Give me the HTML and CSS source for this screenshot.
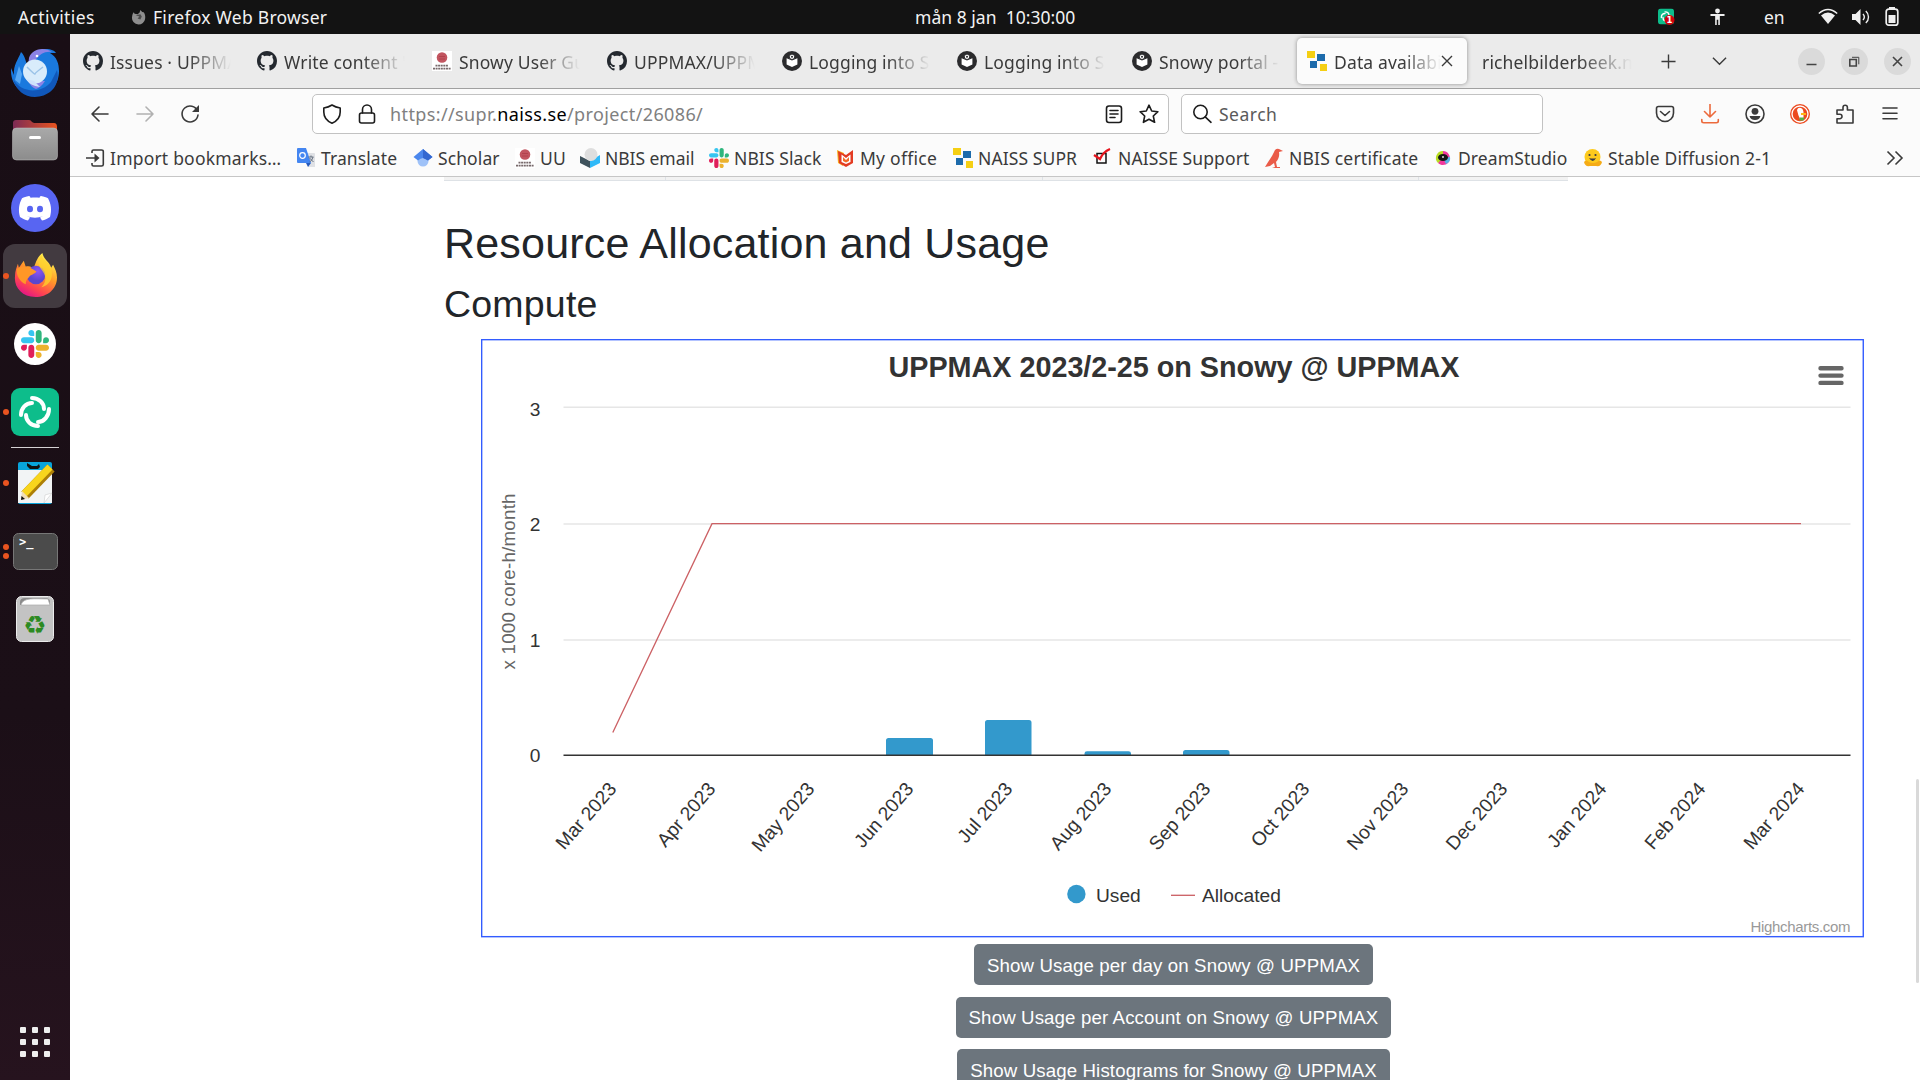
FILE: index.html
```html
<!DOCTYPE html>
<html lang="en">
<head>
<meta charset="utf-8">
<title>Data available</title>
<link rel="stylesheet" href="styles.css">
</head>
<body>
<svg width="0" height="0" class="defs" aria-hidden="true">
  <symbol id="github" viewBox="0 0 16 16"><path fill="#24292f" d="M8 0C3.58 0 0 3.58 0 8c0 3.54 2.29 6.53 5.47 7.59.4.07.55-.17.55-.38 0-.19-.01-.82-.01-1.49-2.01.37-2.53-.49-2.69-.94-.09-.23-.48-.94-.82-1.13-.28-.15-.68-.52-.01-.53.63-.01 1.08.58 1.23.82.72 1.21 1.87.87 2.33.66.07-.52.28-.87.51-1.07-1.78-.2-3.64-.89-3.64-3.95 0-.87.31-1.59.82-2.15-.08-.2-.36-1.02.08-2.12 0 0 .67-.21 2.2.82.64-.18 1.32-.27 2-.27s1.36.09 2 .27c1.53-1.04 2.2-.82 2.2-.82.44 1.1.16 1.92.08 2.12.51.56.82 1.27.82 2.15 0 3.07-1.87 3.75-3.65 3.95.29.25.54.73.54 1.48 0 1.07-.01 1.93-.01 2.2 0 .21.15.46.55.38A8.01 8.01 0 0 0 16 8c0-4.42-3.58-8-8-8z"/></symbol>
  <symbol id="uu" viewBox="0 0 20 20"><path fill="#fff" d="M0 0h20v20H0z"/><circle cx="10" cy="6.500" r="5.300" fill="#c25560"/><path d="M7 5.500h6M7 8h6" stroke="#a83642" opacity=".6"/><path d="M3.500 14.600h13M1 17.600h18" stroke="#77696b" stroke-width="1.600" stroke-dasharray="2 .6"/></symbol>
  <symbol id="mkdocs" viewBox="0 0 20 20"><circle cx="10" cy="10" r="10" fill="#2b2b2d"/><path fill="#fff" d="M4.600 7.200 10 9.600l5.400-2.400v6.400L10 16l-5.400-2.400z"/><circle cx="10" cy="5.800" r="2.700" fill="#fff" stroke="#2b2b2d"/><circle cx="10" cy="5.800" r="1" fill="#2b2b2d"/></symbol>
  <symbol id="naiss" viewBox="0 0 20 20"><path fill="#f5cf13" d="M0 0h8v7H0zM13 13h7v7h-7z"/><path fill="#1d6bab" d="M10 3h8v7h-8zM3 10h7v7H3z"/></symbol>
  <symbol id="slack" viewBox="0 0 122.8 122.8"><path d="M25.8 77.6c0 7.1-5.8 12.9-12.9 12.9S0 84.7 0 77.6s5.8-12.9 12.9-12.9h12.9v12.9zm6.5 0c0-7.1 5.8-12.9 12.9-12.9s12.9 5.8 12.9 12.9v32.3c0 7.1-5.8 12.9-12.9 12.9s-12.9-5.8-12.9-12.9V77.6z" fill="#e01e5a"/><path d="M45.2 25.8c-7.1 0-12.9-5.8-12.9-12.9S38.1 0 45.2 0s12.9 5.8 12.9 12.9v12.9H45.2zm0 6.5c7.1 0 12.9 5.8 12.9 12.9s-5.8 12.9-12.9 12.9H12.9C5.8 58.1 0 52.3 0 45.2s5.8-12.9 12.9-12.9h32.3z" fill="#36c5f0"/><path d="M97 45.2c0-7.1 5.8-12.9 12.9-12.9s12.9 5.8 12.9 12.9-5.8 12.9-12.9 12.9H97V45.2zm-6.5 0c0 7.1-5.8 12.9-12.9 12.9s-12.9-5.8-12.9-12.9V12.9C64.7 5.8 70.5 0 77.6 0s12.9 5.8 12.9 12.9v32.3z" fill="#2eb67d"/><path d="M77.6 97c7.1 0 12.9 5.8 12.9 12.9s-5.8 12.9-12.9 12.9-12.9-5.8-12.9-12.9V97h12.9zm0-6.5c-7.1 0-12.9-5.8-12.9-12.9s5.8-12.9 12.9-12.9h32.3c7.1 0 12.9 5.8 12.9 12.9s-5.8 12.9-12.9 12.9H77.6z" fill="#ecb22e"/></symbol>
  <symbol id="element" viewBox="0 0 48 48"><rect width="48" height="48" rx="9" fill="#0dbd8b"/><g fill="none" stroke="#fff" stroke-width="4" stroke-linecap="round"><path d="M21 10c7 0 12 5 12 11"/><path d="M38 21c0 7-5 13-11 13"/><path d="M27 38c-7 0-12-5-12-11"/><path d="M10 27c0-7 5-12 11-12"/></g></symbol>
</svg>

<header class="topbar">
  <span class="activities">Activities</span>
  <svg class="app-mark" viewBox="0 0 16 16"><path fill="#8e8e8e" d="M8 15.500A7 7 0 0 1 1.200 7C1.400 5 2 3.500 3 2.500l.8 1.600L7 4.500l2-1.500 1-3 2 2 1.500.3C15 4 15.500 7 15 9.500A7 7 0 0 1 8 15.500z"/><path fill="#4a4a4a" d="M5 5.500 9 7l-2 2 3 1 1.500-3L10 4.500z"/></svg>
  <span class="app-name">Firefox Web Browser</span>
  <span class="clock">mån 8 jan &nbsp;10:30:00</span>
  <div class="status">
    <svg class="st-element" viewBox="0 0 18 18"><use href="#element" width="16" height="16" y=".5"/><circle cx="11.500" cy="12" r="5" fill="#d4000b"/><text x="11.500" y="15" text-anchor="middle" class="badge-text">1</text></svg>
    <svg class="st-access" viewBox="0 0 16 18" fill="#efefef"><circle cx="8" cy="2.600" r="2.600"/><path d="M.5 5.800h15v2H10.500V17.500H8.800V12H7.200v5.500H5.500V7.800H.5z"/></svg>
    <span class="lang">en</span>
    <svg class="st-wifi" viewBox="0 0 20 18"><path fill="none" stroke="#efefef" stroke-width="1.400" d="M.8 5.500Q10-2.500 19.200 5.500"/><path fill="#efefef" d="M3 7.500Q10 1.500 17 7.500L10 16z"/></svg>
    <svg class="st-sound" viewBox="0 0 20 18"><path fill="#efefef" d="M1 6h3.500L9.500 1v16L4.500 12H1z"/><path d="M12 6a4.500 4.500 0 0 1 0 6M14.800 3a8 8 0 0 1 0 12" fill="none" stroke="#efefef" stroke-width="1.400"/></svg>
    <svg class="st-battery" viewBox="0 0 14 20"><path fill="#efefef" d="M4 0h6v2H4zM3.500 8h7v8h-7z"/><rect x="1.200" y="2.200" width="11.600" height="16" rx="2.500" fill="none" stroke="#efefef" stroke-width="1.700"/></svg>
  </div>
</header>

<div class="desktop">
<nav class="dock">
  <div class="app bird"><svg width="50" height="50" viewBox="0 0 50 50"><path fill="#1a79de" d="M11 4c5 5 4 10 7 13l2-8c3-7 12-8 16-8 5 0 9 2 10 4h-6c7 4 9 11 9 18 0 14-10 24-24 24C11 47 0 37 1 20l3 7C3 17 8 12 11 4z"/><path fill="#1057ba" d="M3 31c7 13 27 16 38 3l6-12c4 16-8 27-22 27C14 49 6 42 3 31z"/><path fill="#8a82e6" d="M19 10C22 0 35-1 42 4c-8-1-12 3-15 6-2 3-5 4-9 8zM35 33c-3 5-6 7-9 8-3-1-6-4-8-8z"/><circle cx="25" cy="23.500" r="12" fill="#d9ecfb"/><path d="M17 19q8 8 8 7t8-7" fill="none" stroke="#9bc3e8" stroke-width="1.500"/><path fill="#cfe2fb" d="M16 31c3 5 7 7 14 8l-6-6z"/><path fill="#59a9f5" d="m9 18 3 8-2 10-5-4z"/><circle cx="27" cy="8" r="1.300" fill="#fff"/></svg></div>
  <div class="app"><svg width="46" height="42" viewBox="0 0 46 42"><defs><linearGradient id="fold"><stop stop-color="#7c2b55"/><stop offset="1" stop-color="#e9541f"/></linearGradient><linearGradient id="grey" x2="0" y2="1"><stop stop-color="#a9a9a9"/><stop offset="1" stop-color="#8c8c8c"/></linearGradient></defs><path fill="url(#fold)" d="M1 4q0-3 3-3h13q2 0 3 2l2 1h20q3 0 3 4v9H1z"/><rect x=".5" y="9" width="45" height="32" rx="4" fill="url(#grey)" stroke="#c3c3c3" stroke-opacity=".5"/><rect x="17" y="17" width="12" height="3" rx="1.500" fill="#fff"/></svg></div>
  <div class="app"><svg width="48" height="48" viewBox="0 0 48 48"><circle cx="24" cy="24" r="24" fill="#5865f2"/><path fill="#fff" d="M19 12.500 18 12c-3 .5-5 1.200-7 2.300C8 20 7 26 9 33c3 2 5 3 8 3.500l2-3c-1-.4-2-.8-3-1.500 5 2.200 11 2.200 16 0-1 .7-2 1.100-3 1.500l2 3c3-.5 5-1.500 8-3.500 2-7 1-13-2-18.700-2-1.100-4-1.800-7-2.300l-1 .5-.5 1.300c-3-.4-6-.4-9 0z"/><ellipse cx="19" cy="25" rx="3" ry="3.200" fill="#5865f2"/><ellipse cx="29" cy="25" rx="3" ry="3.200" fill="#5865f2"/></svg></div>
  <div class="app active"><i class="dots"><b></b></i><svg width="43" height="45" viewBox="0 0 44 46"><defs><linearGradient id="fx" x1=".8" y1=".1" x2=".3" y2="1"><stop stop-color="#fff04f"/><stop offset=".4" stop-color="#ff9c27"/><stop offset=".75" stop-color="#ff4550"/><stop offset="1" stop-color="#e31587"/></linearGradient><radialGradient id="globe" cx=".6" cy=".3"><stop stop-color="#8f55f5"/><stop offset="1" stop-color="#5b46cf"/></radialGradient></defs><path fill="url(#fx)" d="M22 46C8 46 0 36 1 25c0-6 2-10 3-13l1 4 5-7 2 6c4-1 6 0 8 2 2-5 3-11 9-16 2 8 7 8 9 15l2-3c2 4 4 8 4 13 0 12-10 20-22 20z"/><circle cx="22.500" cy="23.500" r="9.500" fill="url(#globe)"/><path fill="#ff9727" d="M3 17c7-4 13-2 20 3-2 3-6 3-8 6-2 2-3 4-3 7-6-3-10-9-9-16z"/><path fill="#ffd32d" d="M28 3c-3 6-4 10 0 15 5 6 6 12 0 18 10-2 14-13 8-23-3-4-7-5-8-10z" opacity=".75"/></svg></div>
  <div class="app"><svg width="42" height="42" viewBox="0 0 42 42"><circle cx="21" cy="21" r="21" fill="#fff"/><use href="#slack" x="7" y="7" width="28" height="28"/></svg></div>
  <div class="app"><i class="dots"><b></b></i><svg width="48" height="48"><use href="#element"/></svg></div>
  <hr class="dock-line">
  <div class="app"><i class="dots"><b></b></i><svg width="40" height="42" viewBox="0 0 40 42"><rect x="3" width="34" height="42" rx="2" fill="#08a4dc"/><path fill="#f2f4f5" d="M3 8h34v33H3z"/><path fill="#111" d="m12 1 5 3h5l2-2 1 3-2 2h-8l-3-3z"/><path d="m10 33 26-27" stroke="#ad7f06" stroke-width="10"/><path d="m9 32 26-27" stroke="#f8d51d" stroke-width="7"/><path fill="#f0ddb5" d="m6 38 1-9 7 7z"/><path fill="#111" d="m6 38 .5-4 3.500 3z"/><path fill="#fff" stroke="#ccc" stroke-width=".6" d="m29 41 1-8 7-2z"/></svg></div>
  <div class="app"><i class="dots"><b></b><b></b></i><svg width="45" height="37" viewBox="0 0 45 37"><rect x=".5" y=".5" width="44" height="36" rx="5" fill="#4b4b4b" stroke="#777"/><text x="6" y="13" class="prompt">&gt;_</text></svg></div>
  <div class="app"><svg width="38" height="46" viewBox="0 0 38 46"><rect x=".5" y=".5" width="37" height="45" rx="5" fill="#c3c3c3" stroke="#ececec"/><path d="M4 9V6q0-4 5-4h20q5 0 5 4v3z" fill="#8a8a8a"/><path d="M5 9c2-8 14-6 27-6l2 6z" fill="#fff" stroke="#aaa" stroke-width=".7"/><text x="19" y="38" text-anchor="middle" class="recycle">♻</text></svg></div>
  <div class="launcher"><b></b><b></b><b></b><b></b><b></b><b></b><b></b><b></b><b></b></div>
</nav>

<div class="browser">
  <div class="tabs">
    <div class="tab first"><svg><use href="#github"/></svg><span>Issues · UPPMAX</span></div>
    <div class="tab"><svg><use href="#github"/></svg><span>Write content '</span></div>
    <div class="tab"><svg><use href="#uu"/></svg><span>Snowy User Guide</span></div>
    <div class="tab"><svg><use href="#github"/></svg><span>UPPMAX/UPPMAX</span></div>
    <div class="tab"><svg><use href="#mkdocs"/></svg><span>Logging into Snowy</span></div>
    <div class="tab"><svg><use href="#mkdocs"/></svg><span>Logging into Snowy</span></div>
    <div class="tab"><svg><use href="#mkdocs"/></svg><span>Snowy portal -</span></div>
    <div class="tab current"><svg><use href="#naiss"/></svg><span>Data availability</span><svg class="close" viewBox="0 0 12 12"><path d="m1 1 10 10M11 1 1 11"/></svg></div>
    <div class="tab plain"><span>richelbilderbeek.nl</span></div>
    <svg class="tab-tool" viewBox="0 0 16 16"><path d="M8 .5v15M.5 8h15"/></svg>
    <svg class="tab-tool list" viewBox="0 0 16 16"><path d="m1 4 7 7 7-7"/></svg>
    <div class="win">
      <svg viewBox="0 0 27 27"><path d="M8.500 16.500h10"/></svg>
      <svg viewBox="0 0 27 27"><path d="M8.800 11.500h6.500v6.500H8.800z"/><path stroke-width="1" d="M11 9.300h6.800v7"/></svg>
      <svg viewBox="0 0 27 27"><path d="m9 9 9 9m0-9-9 9"/></svg>
    </div>
  </div>

  <div class="toolbar">
    <div class="nav-buttons">
      <svg viewBox="0 0 20 20"><path d="M18 10H2M9 3l-7 7 7 7"/></svg>
      <svg class="off" viewBox="0 0 20 20"><path d="M2 10h16M11 3l7 7-7 7"/></svg>
      <svg viewBox="0 0 20 20"><path d="M17.500 7A8 8 0 1 0 18 11"/><path fill="#3a3a3a" stroke="none" d="M19 1v7h-7z"/></svg>
    </div>
    <div class="field url">
      <svg viewBox="0 0 20 20"><path d="M10 1c3 2 5.500 2.600 8.200 3v4c0 5-3 9-8.200 11.200C4.800 17 1.800 13 1.800 8V4C4.500 3.600 7 3 10 1z"/></svg>
      <svg class="lock" viewBox="0 0 20 20"><rect x="2.500" y="9" width="15" height="10" rx="2"/><path d="M5.500 9V5.500a4.500 4.500 0 0 1 9 0V9"/></svg>
      <span class="address">https://supr.<b>naiss.se</b>/project/26086/</span>
      <svg viewBox="0 0 20 20"><rect x="2.500" y="2" width="15" height="16.500" rx="2.500"/><path d="M6 6.500h8M6 10h8M6 13.500h5"/></svg>
      <svg class="star" viewBox="0 0 20 20"><path d="m10 1.200 2.700 5.800 6.200.7-4.600 4.300 1.300 6.300L10 15.200l-5.600 3.100L5.700 12 1.100 7.700 7.300 7z"/></svg>
    </div>
    <div class="field search">
      <svg viewBox="0 0 20 20"><circle cx="8.500" cy="8" r="6.700"/><path d="m13.200 12.800 5.800 5.500"/></svg>
      <span>Search</span>
    </div>
    <div class="tools">
      <svg viewBox="0 0 20 20"><path d="M3.500 2.500h13q2 0 2 2V9a8.500 8.500 0 0 1-17 0V4.500q0-2 2-2zM5.500 7.500l4.500 4 4.500-4"/></svg>
      <svg class="down" viewBox="0 0 20 20"><path d="M10 0v13M4.500 7.500 10 13l5.500-5.500M1.800 15.500v1.500q0 1.700 2 1.700h12.500q2 0 2-1.700v-1.500"/></svg>
      <svg viewBox="0 0 20 20"><circle cx="10" cy="10" r="9"/><g stroke="none" fill="#3a3a3a"><circle cx="10" cy="7.300" r="3.400"/><path d="M4.500 12h11q-1 4-5.500 4t-5.500-4z"/></g></svg>
      <svg class="duck" viewBox="0 0 20 20"><circle cx="10" cy="10" r="10" fill="#ec4a1f"/><circle cx="10" cy="10" r="8" fill="#ec4a1f" stroke="#fff" stroke-width="1.300"/><path fill="#fff" d="M7 6q1-3 4-2 2.500 1 2.500 5v6H10q-2-4-3-9z"/><path fill="#fdb814" d="M11 9h5v2h-5z"/><path fill="#55b34a" d="M9.500 13.500h5l-1 3h-4z"/></svg>
      <svg viewBox="0 0 20 20"><path d="M2 19v-4.300h2.800a2.200 2.200 0 0 0 0-4.400H2V6h6V3.500a2.200 2.200 0 0 1 4.400 0V6H18v13z"/></svg>
      <svg viewBox="0 0 20 20"><path d="M3 4h14M3 9.300h14M3 14.700h14"/></svg>
    </div>
  </div>

  <div class="bookmarks">
    <a class="bm w1"><svg viewBox="0 0 20 20"><path class="line" d="M7 5V3.500Q7 2 8.500 2h8Q18.300 2 18.300 3.500v13q0 1.500-1.800 1.500h-8Q7 18 7 16.500V15M1 10h12"/><path fill="#3a3a3a" d="m9.500 5.500 5 4.500-5 4.500z"/></svg>Import bookmarks…</a>
    <a class="bm w2"><svg viewBox="0 0 20 20"><path fill="#dfe1e5" d="M10 5h8q1 0 1 1v13h-7z"/><path fill="#4486f1" d="M2 0h8l5 15H2q-1 0-1-1V1q0-1 1-1z"/><path fill="#2559bd" d="M10 15h5l-3 4z"/><circle cx="6.500" cy="7.500" r="2.800" fill="none" stroke="#fff" stroke-width="1.200"/><path d="M12.500 9h5M15 7.500V9m2 0q-1 4-3.500 5M13.500 10l4 4" stroke="#657080" fill="none"/></svg>Translate</a>
    <a class="bm w3"><svg viewBox="0 0 20 20"><circle cx="10" cy="13" r="5.500" fill="#9fc2f8"/><path fill="#4b87ed" d="m10 1 9.500 8-4.500 3.500q-5-5-10 0L.5 9z"/><path fill="#3367d0" d="m10 1 9.500 8-4.500 3.500L10 10z"/></svg>Scholar</a>
    <a class="bm w4"><svg><use href="#uu"/></svg>UU</a>
    <a class="bm w5"><svg viewBox="0 0 20 20"><path fill="#3f525c" d="m0 8 10 5v7L0 15z"/><path fill="#2fb9f8" d="m20 7-10 6v7l10-5z"/><circle cx="11" cy="6.500" r="6.500" fill="#dedede"/></svg>NBIS email</a>
    <a class="bm w6"><svg><use href="#slack"/></svg>NBIS Slack</a>
    <a class="bm w7"><svg viewBox="0 0 20 20"><path fill="#f7b51d" d="m1 2 7 3-1 13-5-3z"/><path fill="#e33b22" d="m17 2-7 5-4-2-4-2 1 12 7 4 7-4z"/><path fill="#fff" d="m5.500 6.500 4.500 3.500 4.500-3.500v7.500L10 16l-4.500-2z"/><path fill="#f36b25" d="m7 9 3 3 3-3v4l-3 1.500L7 13z"/></svg>My office</a>
    <a class="bm w8"><svg><use href="#naiss"/></svg>NAISS SUPR</a>
    <a class="bm w9"><svg viewBox="0 0 20 20"><path fill="none" stroke="#111" stroke-width="1.500" d="M4 5.500h9V15H4z"/><path fill="none" stroke="#e6141d" stroke-width="2.200" d="m1 7 6 4Q10 4 17 1"/></svg>NAISSE Support</a>
    <a class="bm w10"><svg viewBox="0 0 20 20"><path fill="#ea5b48" d="M11 2q2-2 4-1l4 2-4 1q1 6-3 10l1 5h3v1H8l3-1-1-4-4 3-5 1Q4 14 8 8z"/></svg>NBIS certificate</a>
    <a class="bm w11"><svg viewBox="0 0 20 20"><path fill="#f0389c" d="M10 3a7 7 0 1 1-5 12z"/><path fill="#b8dc24" d="M10 3a7 7 0 0 0-5 12l5-5z"/><path fill="#56b4e5" d="m10 10 7-1q1 5-4 7z"/><ellipse cx="10" cy="9.500" rx="5" ry="3.500" fill="#171717"/><circle cx="10" cy="9" r="1" fill="#ddd"/></svg>DreamStudio</a>
    <a class="bm w12"><svg viewBox="0 0 20 20"><circle cx="9.500" cy="9" r="8" fill="#fdca1d"/><path fill="#f5ab16" d="M1 14q2-3 5 0 4 2 8 0 3-3 5 0-1 5-6 4h-6q-5 1-6-4z"/><path fill="#3a3b45" d="M6 10q4 1 7 0-3 6-7 0z"/><circle cx="6.500" cy="7" r="1.100" fill="#3a3b45"/><circle cx="12.500" cy="7" r="1.100" fill="#3a3b45"/></svg>Stable Diffusion 2-1</a>
    <svg class="more" viewBox="0 0 18 18"><path d="m1.500 2.500 6.500 6.500-6.500 6.500m8-13L16 9l-6.500 6.500"/></svg>
  </div>

  <main class="page">
    <div class="table-end"><i></i><i></i><i></i><i></i></div>
    <h1>Resource Allocation and Usage</h1>
    <h2>Compute</h2>
    <svg class="chart" viewBox="481 339 1384 599">
      <rect class="frame" x="481.670" y="339.670" width="1381.600" height="597"/>
      <text class="title" x="1174" y="376.500" text-anchor="middle" textLength="571">UPPMAX 2023/2-25 on Snowy @ UPPMAX</text>
      <path class="burger" d="M1820.500 368.300h21M1820.500 375.600h21M1820.500 382.900h21"/>
      <path class="grid" d="M563.500 407.200h1287M563.500 524h1287M563.500 640h1287"/>
      <g class="bars"><path d="M886 755V740.500q0-2.500 2.500-2.500h42q2.500 0 2.500 2.500V755zM985 755V722.500q0-2.500 2.500-2.500h41.500q2.500 0 2.500 2.500V755zM1084.500 755v-1.500q0-2.200 2.500-2.200h41.500q2.500 0 2.500 2.200v1.500zM1183 755v-2.500q0-2.500 2.500-2.500h41.500q2.500 0 2.500 2.500v2.500z"/></g>
      <path class="axis" d="M563.500 755.200h1287"/>
      <path class="alloc" d="M612.800 732.500 712 523.600h1089"/>
      <g class="label" text-anchor="end"><text x="540.500" y="416">3</text><text x="540.500" y="531">2</text><text x="540.500" y="647">1</text><text x="540.500" y="761.500">0</text></g>
      <text class="unit" transform="translate(515 581.500) rotate(-90)" text-anchor="middle" textLength="176">x 1000 core-h/month</text>
      <g class="label" text-anchor="end">
        <text transform="translate(617.500 789.500) rotate(-49)">Mar 2023</text>
        <text transform="translate(716.500 789.500) rotate(-49)">Apr 2023</text>
        <text transform="translate(815.500 789.500) rotate(-49)">May 2023</text>
        <text transform="translate(914.500 789.500) rotate(-49)">Jun 2023</text>
        <text transform="translate(1013.500 789.500) rotate(-49)">Jul 2023</text>
        <text transform="translate(1112.500 789.500) rotate(-49)">Aug 2023</text>
        <text transform="translate(1211.500 789.500) rotate(-49)">Sep 2023</text>
        <text transform="translate(1310.500 789.500) rotate(-49)">Oct 2023</text>
        <text transform="translate(1409.500 789.500) rotate(-49)">Nov 2023</text>
        <text transform="translate(1508.500 789.500) rotate(-49)">Dec 2023</text>
        <text transform="translate(1607.500 789.500) rotate(-49)">Jan 2024</text>
        <text transform="translate(1706.500 789.500) rotate(-49)">Feb 2024</text>
        <text transform="translate(1805.500 789.500) rotate(-49)">Mar 2024</text>
      </g>
      <circle cx="1076.400" cy="894" r="9.200" fill="#39c"/>
      <text class="legend" x="1096" y="901.700">Used</text>
      <path class="alloc" d="M1171 895.300h24"/>
      <text class="legend" x="1202" y="901.700">Allocated</text>
      <text class="credit" x="1850.500" y="932" text-anchor="end" textLength="100">Highcharts.com</text>
    </svg>
    <div class="actions">
      <button>Show Usage per day on Snowy @ UPPMAX</button>
      <button>Show Usage per Account on Snowy @ UPPMAX</button>
      <button>Show Usage Histograms for Snowy @ UPPMAX</button>
    </div>
    <div class="scroll-thumb"></div>
  </main>
</div>
</div>
</body>
</html>
```
FILE: styles.css
```css
* { box-sizing: border-box; }
body { margin: 0; width: 1920px; height: 1080px; overflow: hidden; background: #fff; color: #3a3a3a; font: 17.500px "Noto Sans", sans-serif; display: flex; flex-direction: column; }
svg { display: block; flex: none; }
.defs { display: none; }

.topbar { height: 34px; flex: none; background: #131313; color: #f2f2f2; display: flex; align-items: center; }
.activities { width: 113px; padding-left: 18px; white-space: nowrap; letter-spacing: .38px; }
.app-mark { width: 15px; height: 15px; margin-left: 18px; }
.app-name { width: 762px; margin-left: 7px; letter-spacing: .27px; }
.clock { width: 743px; letter-spacing: .03px; }
.status { display: flex; align-items: center; }
.st-element { width: 18px; height: 18px; margin-right: 34px; }
.st-access { width: 15px; height: 18px; margin-right: 39px; }
.lang { width: 54px; }
.st-wifi { width: 20px; height: 18px; margin-right: 13px; }
.st-sound { width: 20px; height: 18px; margin-right: 14px; }
.st-battery { width: 14px; height: 20px; }
.badge-text { font: bold 8.500px "DejaVu Sans", sans-serif; fill: #fff; }

.desktop { flex: 1; min-height: 0; display: flex; }
.dock { width: 70px; flex: none; padding-top: 4px; background: linear-gradient(#190e15, #1b0f17 65%, #26131e); display: flex; flex-direction: column; }
.app { position: relative; height: 68px; flex: none; display: flex; align-items: center; justify-content: center; }
.active::before { content: ""; position: absolute; inset: 2px 3px; border-radius: 12px; background: #423a40; }
.app svg { position: relative; }
.bird { padding-top: 2px; }
.active { padding-bottom: 3px; }
.dots { position: absolute; left: 3px; top: 0; height: 68px; display: flex; flex-direction: column; justify-content: center; gap: 3px; z-index: 1; }
.dots b { width: 6px; height: 6px; border-radius: 50%; background: #e95420; }
.dock-line { width: 48px; height: 1px; margin: 1px auto; border: 0; background: #d5d2d4; flex: none; }
.prompt { font: bold 12px "DejaVu Sans Mono", monospace; fill: #fff; }
.recycle { font: 26px "DejaVu Sans", sans-serif; fill: #2c8a22; }
.launcher { margin: auto auto 23px; display: grid; grid-template-columns: repeat(3, 6px); gap: 6px; }
.launcher b { height: 6px; border-radius: 1px; background: #eee; }

.browser { flex: 1; min-width: 0; display: flex; flex-direction: column; }
.tabs { height: 55px; flex: none; padding-left: 3px; background: #ebebeb; border-bottom: 1px solid #a0a0a0; display: flex; align-items: center; }
.tab { width: 170px; height: 46px; margin-right: 5px; padding-left: 10px; flex: none; border-radius: 5px; display: flex; align-items: center; }
.first { margin-right: 4px; }
.tab svg { width: 20px; height: 20px; margin-right: 7px; }
.tab span { width: 121px; padding-top: 1px; overflow: hidden; white-space: nowrap; letter-spacing: .15px; -webkit-mask-image: linear-gradient(90deg, #000 65%, transparent); mask-image: linear-gradient(90deg, #000 65%, transparent); }
.current { margin-right: 6px; background: #fbfbfb; box-shadow: 0 0 4px #0006; }
.tab.current span { width: 107px; }
.tab .close { width: 12px; height: 12px; margin: 0; fill: none; stroke: #3a3a3a; stroke-width: 1.400; }
.plain { width: 179px; margin: 0; padding-left: 9px; }
.tab.plain span { width: 150px; }
.tab-tool { width: 15px; height: 15px; margin-left: 9px; fill: none; stroke: #3a3a3a; stroke-width: 1.500; }
.list { margin-left: 36px; }
.win { display: flex; gap: 16px; margin-left: 71px; }
.win svg { width: 27px; height: 27px; border-radius: 50%; background: #dadada; fill: none; stroke: #444; stroke-width: 1.600; }

.toolbar { height: 51px; flex: none; padding-bottom: 2px; background: #fbfbfb; display: flex; align-items: center; }
.nav-buttons { display: flex; gap: 25px; margin-left: 20px; }
.nav-buttons svg, .field svg, .tools svg { width: 20px; height: 20px; fill: none; stroke: #3a3a3a; stroke-width: 1.600; stroke-linecap: round; stroke-linejoin: round; }
.nav-buttons .off { opacity: .38; }
.field { height: 40px; border: 1px solid #c2c2c2; border-radius: 5px; background: #fff; display: flex; align-items: center; }
.field svg { stroke: #1c1c1c; }
.url { width: 857px; margin-left: 112px; padding-left: 9px; }
.lock { margin: 0 13px 0 15px; }
.address { width: 714px; color: #808080; font-size: 18px; letter-spacing: .38px; }
.address b { color: #000; font-weight: 400; }
.star { margin-left: 15px; }
.search { width: 362px; margin-left: 12px; padding-left: 10px; gap: 7px; color: #5a5a5a; letter-spacing: .5px; }
.tools { display: flex; gap: 25px; margin-left: 112px; }
.tools .down { stroke: #ec6a3c; }
.tools .duck { stroke: none; }

.bookmarks { height: 37px; flex: none; padding: 0 0 1px 15px; background: #fbfbfb; border-bottom: 1px solid #c6c6c6; display: flex; align-items: center; }
.bm { display: flex; align-items: center; gap: 5px; white-space: nowrap; flex: none; letter-spacing: .1px; }
.bm svg { width: 20px; height: 20px; }
.line { fill: none; stroke: #3a3a3a; stroke-width: 1.600; }
.w1 { width: 211px; letter-spacing: .2px; } .w2 { width: 117px; } .w3 { width: 102px; } .w4 { width: 65px; }
.w5 { width: 129px; letter-spacing: -.05px; } .w6 { width: 127px; } .w7 { width: 117px; letter-spacing: .25px; } .w8 { width: 140px; }
.w9 { width: 171px; } .w10 { width: 169px; letter-spacing: .2px; } .w11 { width: 150px; } .w12 { width: 302px; letter-spacing: .15px; }
.w7 { gap: 4px; }
.more { width: 18px; height: 18px; margin-left: 1px; fill: none; stroke: #3a3a3a; stroke-width: 1.600; }

.page { position: relative; flex: 1; min-height: 0; overflow: hidden; background: #fff; color: #212529; font-family: "Liberation Sans", Arial, sans-serif; }
.table-end { width: 1124px; height: 4px; margin-left: 374px; display: grid; grid-template-columns: 221px 377px 376px 1fr; background: #f2f2f2; border-bottom: 1px solid #dee2e6; }
.table-end i + i { border-left: 1px solid #dee2e6; }
h1, h2 { margin: 0 0 0 374px; font-weight: 400; white-space: nowrap; }
h1 { margin-top: 37px; font-size: 43px; line-height: 51px; letter-spacing: .19px; }
h2 { margin-top: 13px; font-size: 37.500px; line-height: 45px; letter-spacing: .2px; }
.chart { width: 1384px; height: 599px; margin: 12px 0 0 411px; font-family: "Liberation Sans", Arial, sans-serif; }
.frame { fill: #fff; stroke: #335cff; stroke-width: 1.400; }
.title { font-size: 28.800px; font-weight: 700; fill: #333; }
.burger { stroke: #666; stroke-width: 4.400; stroke-linecap: round; }
.grid { stroke: #e6e6e6; stroke-width: 1.400; }
.axis { stroke: #333; stroke-width: 1.600; }
.bars { fill: #39c; }
.alloc { fill: none; stroke: #cc6165; stroke-width: 1.330; }
.label, .legend { font-size: 19.200px; fill: #333; }
.unit { font-size: 18.670px; fill: #666; }
.credit { font-size: 15px; fill: #999; }
.actions { width: 1383px; margin: 6px 0 0 412px; display: flex; flex-direction: column; align-items: center; gap: 11.500px; }
.actions button { height: 41px; flex: none; padding: 2px 13px 0; border: 0; border-radius: 5px; background: #6c757d; color: #fff; font: 18.670px "Liberation Sans", Arial, sans-serif; letter-spacing: .13px; white-space: nowrap; }
.scroll-thumb { position: absolute; right: 1px; top: 602px; width: 3px; height: 204px; border-radius: 2px; background: #d9d9d9; }
```
